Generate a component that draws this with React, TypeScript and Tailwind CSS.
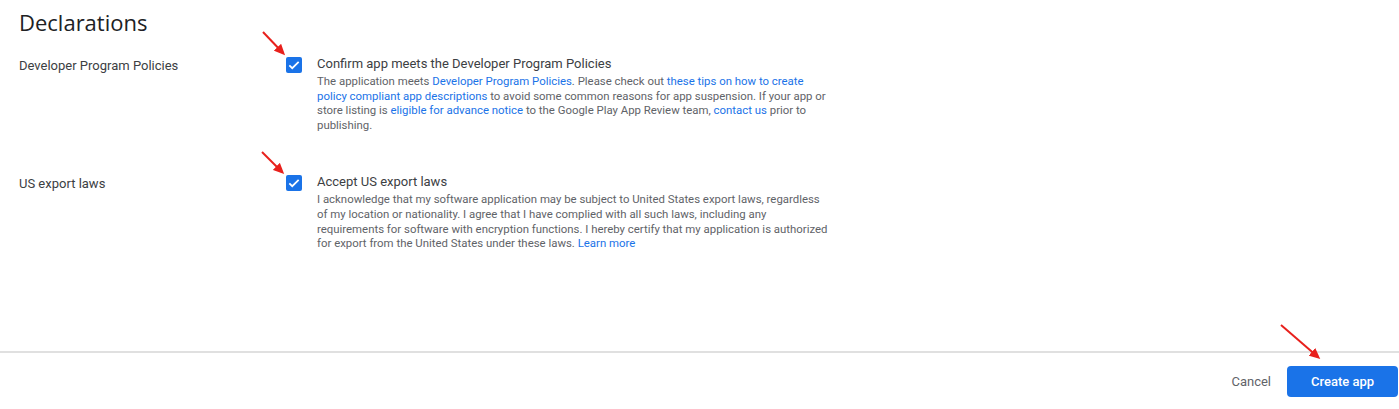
import React from "react";

const Check = () => (
  <div className="w-4 h-4 rounded-[2px] bg-[#1a73e8] flex items-center justify-center shrink-0">
    <svg width="14" height="14" viewBox="0 0 24 24" fill="none">
      <path d="M4 12.5l5 5L20 6.5" stroke="white" strokeWidth="3" />
    </svg>
  </div>
);

const Link = ({ children }: { children: React.ReactNode }) => (
  <span className="text-[#1a73e8]">{children}</span>
);

interface RowProps {
  label: string;
  title: string;
  children: React.ReactNode;
  className?: string;
}

const Row: React.FC<RowProps> = ({ label, title, children, className }) => (
  <div className={"flex " + (className || "")}>
    <div className="w-[267px] pt-[1px] text-[13px] text-[#3c4043] leading-[16px]">{label}</div>
    <Check />
    <div className="ml-[15px] w-[540px]">
      <div className="text-[13px] text-[#3c4043] leading-[14px]">{title}</div>
      <p className="mt-[3px] text-[11.4px] leading-[14.6px] text-[#5f6368] whitespace-nowrap">{children}</p>
    </div>
  </div>
);

const Arrows = () => (
  <svg className="absolute inset-0 pointer-events-none" width="1399" height="409">
    <defs>
      <marker id="ah" markerWidth="11" markerHeight="10" refX="8" refY="5" orient="auto" markerUnits="userSpaceOnUse">
        <path d="M0 0L11 5L0 10z" fill="#e8201c" />
      </marker>
    </defs>
    <line x1="263" y1="32" x2="283" y2="53" stroke="#e8201c" strokeWidth="2" markerEnd="url(#ah)" />
    <line x1="262" y1="152" x2="282" y2="172" stroke="#e8201c" strokeWidth="2" markerEnd="url(#ah)" />
    <line x1="1281" y1="325" x2="1318" y2="357" stroke="#e8201c" strokeWidth="2" markerEnd="url(#ah)" />
  </svg>
);

export default function App() {
  return (
    <div className="relative w-[1399px] h-[409px] bg-white overflow-hidden" style={{ fontFamily: "Roboto, 'Liberation Sans', sans-serif" }}>
      <div className="h-[351px] pl-[19px] pt-[8px]">
        <h1 className="text-[22px] leading-[28px] text-[#202124]" style={{ fontFamily: "'Open Sans', Roboto, sans-serif" }}>
          Declarations
        </h1>
        <Row label="Developer Program Policies" title="Confirm app meets the Developer Program Policies" className="mt-[21px]">
          The application meets <Link>Developer Program Policies</Link>. Please check out{" "}
          <Link>these tips on how to create</Link>
          <br />
          <Link>policy compliant app descriptions</Link> to avoid some common reasons for app suspension. If your app or
          <br />
          store listing is <Link>eligible for advance notice</Link> to the Google Play App Review team,{" "}
          <Link>contact us</Link> prior to
          <br />
          publishing.
        </Row>
        <Row label="US export laws" title="Accept US export laws" className="mt-[43px]">
          I acknowledge that my software application may be subject to United States export laws, regardless
          <br />
          of my location or nationality. I agree that I have complied with all such laws, including any
          <br />
          requirements for software with encryption functions. I hereby certify that my application is authorized
          <br />
          for export from the United States under these laws. <Link>Learn more</Link>
        </Row>
      </div>
      <div className="border-t-2 border-[#e0e0e0] h-[58px] flex items-center justify-end pr-[1px] pt-[1px]">
        <button className="text-[13px] text-[#5f6368] mr-[16px]">Cancel</button>
        <button className="w-[111px] h-[31px] rounded-[4px] bg-[#1a73e8] text-white text-[13px] font-medium">
          Create app
        </button>
      </div>
      <Arrows />
    </div>
  );
}
